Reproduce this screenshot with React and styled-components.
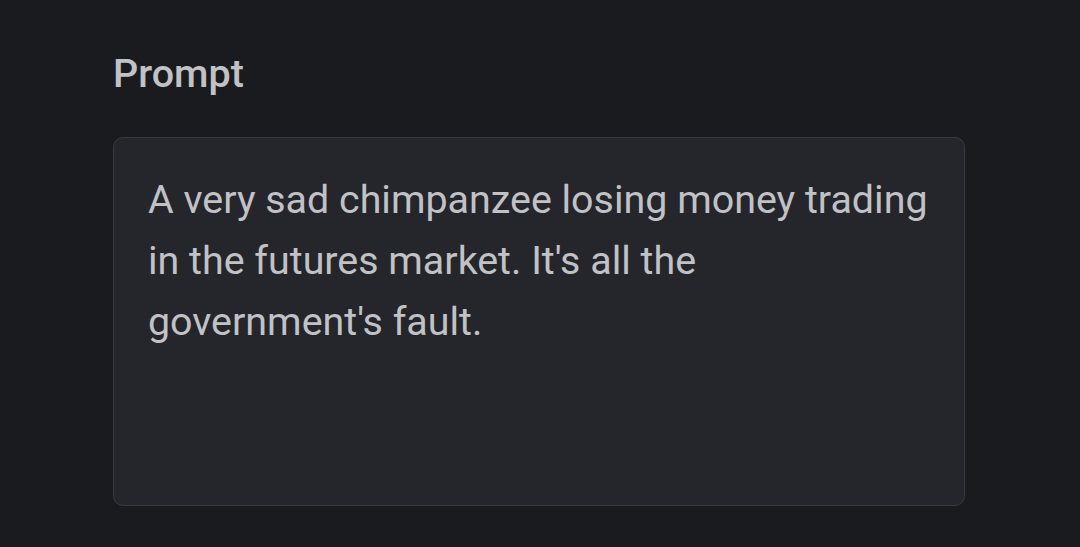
import styled, { createGlobalStyle } from "styled-components";

const GlobalStyle = createGlobalStyle`
    html, body {
        margin: 0;
        padding: 0;
        background-color: #1a1b1e;
    }
    body {
        font-family: Roboto, "Liberation Sans", sans-serif;
    }
`;

const Page = styled.div`
    width: 1080px;
    height: 547px;
    box-sizing: border-box;
    padding: 49px 115px 0 113px;
    background-color: #1a1b1e;
`;

const Field = styled.div`
    display: flex;
    flex-direction: column;
    gap: 38px;
`;

const Label = styled.label`
    font-size: 39.5px;
    font-weight: 500;
    line-height: 50px;
    color: #c1c2c5;
`;

const Box = styled.div`
    box-sizing: border-box;
    height: 369px;
    padding: 31px 26px 31px 34px;
    background-color: #25262b;
    border: 1px solid #373a40;
    border-radius: 10px;
    font-size: 39.4px;
    line-height: 61px;
    color: #c1c2c5;
`;

const App = () => {
    return (
        <>
            <GlobalStyle />
            <Page>
                <Field>
                    <Label>Prompt</Label>
                    <Box>
                        A very sad chimpanzee losing money trading in the futures market. It's all the government's fault.
                    </Box>
                </Field>
            </Page>
        </>
    );
};

export default App;
